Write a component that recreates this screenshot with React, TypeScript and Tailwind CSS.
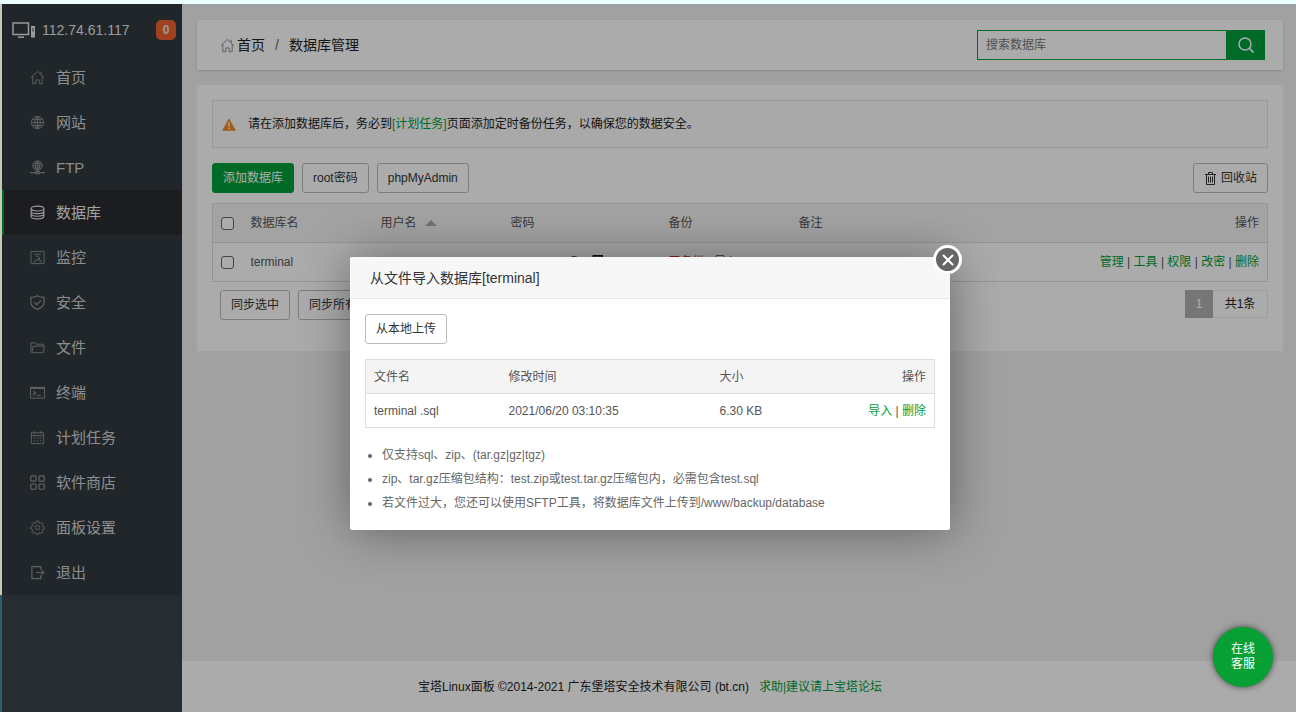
import type { ReactNode } from "react";
import clsx from "clsx";

function Svg({ className, children }: { className?: string; children: ReactNode }) {
  return (
    <svg viewBox="0 0 16 16" fill="none" stroke="currentColor" aria-hidden="true" className={clsx("shrink-0", className)}>
      {children}
    </svg>
  );
}

const homePath = <path d="M1 8.2 8 1.4l7 6.8M3 6.6v8h3.2v-4h3.6v4H13v-8M12 2v3" />;

const menu: { label: string; icon: ReactNode }[] = [
  { label: "首页", icon: homePath },
  {
    label: "网站",
    icon: <path d="M8 1.5a6.5 6.5 0 1 0 0 13 6.5 6.5 0 0 0 0-13ZM8 1.5v13M1.5 8h13M2.5 4.8h11M2.5 11.2h11M8 1.5C4 5 4 11 8 14.5M8 1.5c4 3.5 4 9.5 0 13" />,
  },
  {
    label: "FTP",
    icon: (
      <>
        <path d="M8 1a5 5 0 1 0 0 10A5 5 0 0 0 8 1ZM8 1v10M3 6h10M3.9 3.5h8.2M3.9 8.5h8.2M8 1C5 4 5 8 8 11M8 1c3 3 3 7 0 10" />
        <path strokeWidth="1.3" d="M0 13.5h6M10 13.5h6M6.5 12.5h3v2h-3z" />
      </>
    ),
  },
  {
    label: "数据库",
    icon: (
      <g strokeWidth="1.2">
        <ellipse cx="8" cy="3.8" rx="6.8" ry="2.6" />
        <path d="M1.2 3.8v8.4c0 1.5 3 2.6 6.8 2.6s6.8-1.100 6.8-2.600V3.800M1.200 6.600c0 1.500 3 2.600 6.800 2.600s6.800-1.100 6.800-2.600M1.200 9.400C1.200 10.900 4.200 12 8 12s6.800-1.100 6.800-2.600" />
      </g>
    ),
  },
  { label: "监控", icon: <path d="M1 1.5h14v13H1zM4.5 4.5h7M6.500 6.500h3M3.500 12.500h2l1.500-2.500 1.500 1L9.500 8l1.500 4.500h1.500" /> },
  { label: "安全", icon: <path strokeWidth="1.3" d="M8 .8c2 1.200 4.600 1.700 7 1.700v5.200c0 3.800-3.200 6.200-7 7.700-3.800-1.500-7-3.900-7-7.700V2.500C3.400 2.500 6 2 8 .8ZM4.600 7.600l2.600 2.600 4.500-4.500" /> },
  { label: "文件", icon: <path d="M2 13.500 1 12.500v-9.500h4.500l1 1.500H14v2M2 13.500l1.500-7h12l-1.500 7z" /> },
  {
    label: "终端",
    icon: (
      <>
        <path d="M0.500 2.500h15v11.500h-15z" />
        <path strokeWidth="2" d="M0 3.200h16" />
        <path strokeWidth="1.300" d="M3.500 6.500 6 8.800l-2.500 2.200M7.500 11.200h4" />
      </>
    ),
  },
  { label: "计划任务", icon: <path d="M1.500 3h13v11.500h-13zM4.500 1.200v3M11.500 1.200v3M1.500 6h13M4 8.500h1.500M7.300 8.500h1.500M10.500 8.500H12M4 11.500h1.500M7.300 11.500h1.500M10.500 11.500H12" /> },
  {
    label: "软件商店",
    icon: (
      <g strokeWidth="1.300">
        <rect x="0.800" y="1" width="5.600" height="5.600" rx="1" />
        <rect x="9.600" y="1" width="5.600" height="5.600" rx="1" />
        <rect x="0.800" y="9.600" width="5.600" height="5.600" rx="1" />
        <rect x="9.600" y="9.600" width="5.600" height="5.600" rx="1" />
      </g>
    ),
  },
  {
    label: "面板设置",
    icon: (
      <>
        <circle cx="8" cy="8" r="2.300" />
        <path d="M6.800 1.200h2.400l.4 1.900 1.300.6 1.700-1.100 1.500 1.600-1 1.700.5 1.200 1.700.5v1.700l-1.700.5-.6 1.300 1 1.700-1.500 1.500-1.700-1-1.300.5-.4 1.800H6.800l-.4-1.800-1.300-.5-1.700 1L1.900 12.800l1-1.700-.6-1.300-1.600-.5V7.600l1.600-.5.600-1.200-1-1.700 1.500-1.600 1.700 1.100 1.300-.6z" />
      </>
    ),
  },
  { label: "退出", icon: <path strokeWidth="1.300" d="M11.500 5V1.700H2v12.800h9.500V11M6.500 8h8.300M12.300 5.500 14.800 8l-2.500 2.500" /> },
];

const rowActions = ["管理", "工具", "权限", "改密", "删除"];

const notes = [
  "仅支持sql、zip、(tar.gz|gz|tgz)",
  "zip、tar.gz压缩包结构：test.zip或test.tar.gz压缩包内，必需包含test.sql",
  "若文件过大，您还可以使用SFTP工具，将数据库文件上传到/www/backup/database",
];

function Button({ primary, children }: { primary?: boolean; children: ReactNode }) {
  return (
    <button
      type="button"
      className={clsx(
        "flex h-[30px] items-center gap-1 rounded-[3px] border px-2.5 text-xs whitespace-nowrap",
        primary ? "border-[#00a03a] bg-[#00a03a] text-white" : "border-[#bbb] bg-white text-[#333]",
      )}
    >
      {children}
    </button>
  );
}

function Actions({ items }: { items: string[] }) {
  return (
    <span className="whitespace-nowrap">
      {items.map((item, i) => (
        <span key={item}>
          {i > 0 && " | "}
          <a href="#" className="text-[#00a03a]">{item}</a>
        </span>
      ))}
    </span>
  );
}

function Checkbox({ label }: { label: string }) {
  return (
    <input
      type="checkbox"
      aria-label={label}
      className="block size-[13px] appearance-none rounded-[3px] border border-[#666] bg-white"
    />
  );
}

function Sidebar() {
  return (
    <aside className="w-[180px] shrink-0 bg-[#3a4247]">
      <div className="bg-[#323a3f]">
        <div className="flex h-[51px] items-center pr-1.5 pl-2.5 text-sm text-[#e4e6e7]">
          <svg viewBox="0 0 24 18" fill="none" stroke="currentColor" aria-hidden="true" className="h-[18px] w-6">
            <path strokeWidth="1.500" d="M1 2h15.500v11.500H1z" />
            <path strokeWidth="1.500" d="M6 16.200h6" />
            <path fill="currentColor" stroke="none" d="M19 5h4v11.500h-4z" />
            <path stroke="#323a3f" d="M21 7v3.500" />
          </svg>
          <span className="ml-1.5 flex-1">112.74.61.117</span>
          <span className="flex size-5 items-center justify-center rounded-[5px] bg-[#f0622f] text-xs font-bold">0</span>
        </div>
        <nav>
          {menu.map(({ label, icon }) => {
            const active = label === "数据库";
            return (
              <a
                key={label}
                href="#"
                className={clsx(
                  "flex h-[45px] items-center gap-[11px] border-l-2 pl-[26px] text-[15px]",
                  active ? "border-[#00a03a] bg-[#2a2c30] text-[#f0f0f0]" : "border-transparent text-[#d0d3d5]",
                )}
              >
                <Svg className={clsx("size-[15px]", active ? "text-[#e4e4e4]" : "text-[#8b9296]")}>{icon}</Svg>
                {label}
              </a>
            );
          })}
        </nav>
      </div>
    </aside>
  );
}

function Header() {
  return (
    <header className="flex h-[50px] items-center justify-between bg-white pr-[18px] pl-[23px] shadow-sm">
      <div className="flex items-center text-sm text-[#222]">
        <Svg className="size-[15px] text-[#888]">{homePath}</Svg>
        <a href="#" className="ml-0.5">首页</a>
        <span className="px-2.5 text-[#666]">/</span>
        <span>数据库管理</span>
      </div>
      <form className="flex h-[30px]">
        <input
          type="text"
          aria-label="搜索数据库"
          placeholder="搜索数据库"
          className="w-[250px] border border-[#00a03a] bg-white px-2 text-xs placeholder:text-[#777]"
        />
        <button type="button" aria-label="搜索" className="flex w-[38px] items-center justify-center bg-[#00a03a] text-white">
          <Svg className="size-4">
            <circle cx="7" cy="7" r="6" strokeWidth="1.500" />
            <path strokeWidth="1.700" d="m11.300 11.300 4.200 4.200" />
          </Svg>
        </button>
      </form>
    </header>
  );
}

function DatabaseTable() {
  return (
    <table className="w-full table-fixed border-collapse border border-[#ddd] text-left text-[#555]">
      <colgroup>
        <col className="w-[30px]" />
        <col className="w-[130px]" />
        <col className="w-[130px]" />
        <col className="w-[158px]" />
        <col className="w-[130px]" />
        <col />
        <col className="w-[180px]" />
      </colgroup>
      <thead>
        <tr className="h-[39px] border-b border-[#ddd] bg-[#f4f4f4] [&>th]:px-2 [&>th]:font-normal">
          <th><Checkbox label="全选" /></th>
          <th>数据库名</th>
          <th>
            <span className="flex items-center gap-2">
              用户名
              <svg viewBox="0 0 12 6" aria-hidden="true" className="h-1.5 w-3 fill-[#aaa]"><path d="M0 6 6 0l6 6z" /></svg>
            </span>
          </th>
          <th>密码</th>
          <th>备份</th>
          <th>备注</th>
          <th className="text-right">操作</th>
        </tr>
      </thead>
      <tbody>
        <tr className="h-[39px] [&>td]:px-2">
          <td><Checkbox label="terminal" /></td>
          <td>terminal</td>
          <td>terminal</td>
          <td>
            <span className="flex items-center gap-2">
              <span className="w-12">**********</span>
              <Svg className="size-3.5"><path strokeWidth="2" d="M1 8c3-8 11-8 14 0-3 7-11 7-14 0Z" /><circle cx="8" cy="8" r="2" /></Svg>
              <Svg className="size-3.5 text-[#222]"><path strokeWidth="2" d="M5 1h10v10H5zM1 5h10v10H1z" /></Svg>
            </span>
          </td>
          <td><a href="#" className="text-[#e02020]">无备份</a> | 导入</td>
          <td>terminal</td>
          <td className="text-right"><Actions items={rowActions} /></td>
        </tr>
      </tbody>
    </table>
  );
}

function ImportDialog() {
  return (
    <div role="dialog" aria-labelledby="import-title" className="relative w-[600px] rounded-xs bg-white shadow-[1px_1px_50px_rgba(0,0,0,0.4)]">
      <h2 id="import-title" className="flex h-[42px] items-center rounded-t-xs border-b border-[#e6e6e6] bg-[#f7f7f7] px-5 text-sm text-[#333]">
        从文件导入数据库[terminal]
      </h2>
      <button
        type="button"
        aria-label="关闭"
        className="absolute -top-3 -right-3 flex size-[29px] items-center justify-center rounded-full border-[3px] border-white bg-[#666] text-white"
      >
        <Svg className="size-4"><path strokeWidth="2" strokeLinecap="round" d="m3.500 3.500 9 9m0-9-9 9" /></Svg>
      </button>
      <div className="p-[15px]">
        <Button>从本地上传</Button>
        <table className="mt-[15px] w-full table-fixed border-collapse border border-[#ddd] text-left text-[#555]">
          <colgroup>
            <col className="w-[135px]" />
            <col className="w-[211px]" />
            <col />
            <col className="w-[100px]" />
          </colgroup>
          <thead>
            <tr className="h-[34px] border-b border-[#ddd] bg-[#f4f4f4] [&>th]:px-2 [&>th]:font-normal">
              <th>文件名</th>
              <th>修改时间</th>
              <th>大小</th>
              <th className="text-right">操作</th>
            </tr>
          </thead>
          <tbody>
            <tr className="h-[34px] [&>td]:px-2">
              <td>terminal .sql</td>
              <td>2021/06/20 03:10:35</td>
              <td>6.30 KB</td>
              <td className="text-right"><Actions items={["导入", "删除"]} /></td>
            </tr>
          </tbody>
        </table>
        <ul className="mt-[15px] list-disc pl-[17px] leading-6 text-[#666]">
          {notes.map((note) => (
            <li key={note}>{note}</li>
          ))}
        </ul>
      </div>
    </div>
  );
}

export default function App() {
  return (
    <div className="flex min-h-screen flex-col font-['Liberation_Sans','Noto_Sans_CJK_SC',sans-serif] text-xs">
      <div className="h-1 bg-[#ebfffd]" />
      <div className="flex flex-1">
        <div className="flex w-0.5 flex-col">
          <div className="h-[591px] bg-[#c8c8ba]" />
          <div className="flex-1 bg-[#2f5c6c]" />
        </div>
        <div className="relative flex flex-1">
          <Sidebar />
          <div className="flex min-w-0 flex-1 flex-col bg-[#f0f0f0]">
            <main className="flex flex-1 flex-col gap-[15px] pt-4 pr-[13px] pl-[15px]">
              <Header />
              <section className="bg-white px-[15px] pt-[15px] pb-[31px]">
                <div className="flex h-12 items-center gap-3 border border-[#e6e6e6] bg-[#fcfcfc] px-[9px] text-[#222]">
                  <svg viewBox="0 0 14 13" aria-hidden="true" className="h-[13px] w-3.5">
                    <path fill="#f08a24" d="M7 .3 14 12.700H0z" />
                    <path stroke="#fff" strokeWidth="1.400" d="M7 4.300v4.200M7 9.600v1.400" />
                  </svg>
                  <p>
                    请在添加数据库后，务必到<a href="#" className="text-[#00a03a]">[计划任务]</a>页面添加定时备份任务，以确保您的数据安全。
                  </p>
                </div>
                <div className="mt-[15px] mb-2.5 flex gap-2">
                  <Button primary>添加数据库</Button>
                  <Button>root密码</Button>
                  <Button>phpMyAdmin</Button>
                  <div className="ml-auto">
                    <Button>
                      <svg viewBox="0 0 13 14" fill="none" stroke="currentColor" aria-hidden="true" className="h-3.5 w-[13px]">
                        <path d="M1 3.500h11M4.500 3.500v-2h4v2M2.500 3.500v10h8v-10M4.500 5.500v6M6.500 5.500v6M8.500 5.500v6" />
                      </svg>
                      回收站
                    </Button>
                  </div>
                </div>
                <DatabaseTable />
                <div className="mt-2 flex justify-between pl-2">
                  <div className="flex gap-2">
                    <Button>同步选中</Button>
                    <Button>同步所有</Button>
                  </div>
                  <div className="flex h-7 leading-7 text-[#222]">
                    <span className="w-7 bg-[#b0b0b0] text-center text-white">1</span>
                    <span className="flex w-[55px] items-center justify-center border border-l-0 border-[#eee]">共1条</span>
                  </div>
                </div>
              </section>
            </main>
            <footer className="flex h-[51px] items-center justify-center gap-2.5 bg-white pr-[178px] text-[#222]">
              <span>宝塔Linux面板 ©2014-2021 广东堡塔安全技术有限公司 (bt.cn)</span>
              <a href="#" className="text-[#00a03a]">求助|建议请上宝塔论坛</a>
            </footer>
          </div>
          <div className="absolute inset-0 flex items-start justify-center bg-black/33 pt-[253px] pl-0.5">
            <ImportDialog />
          </div>
          <button
            type="button"
            className="absolute right-[23px] bottom-[25px] size-[60px] rounded-full bg-[#06a035] px-4 text-xs leading-[15px] text-white shadow-[0_0_6px_rgba(0,0,0,0.6)]"
          >
            在线客服
          </button>
        </div>
      </div>
    </div>
  );
}
